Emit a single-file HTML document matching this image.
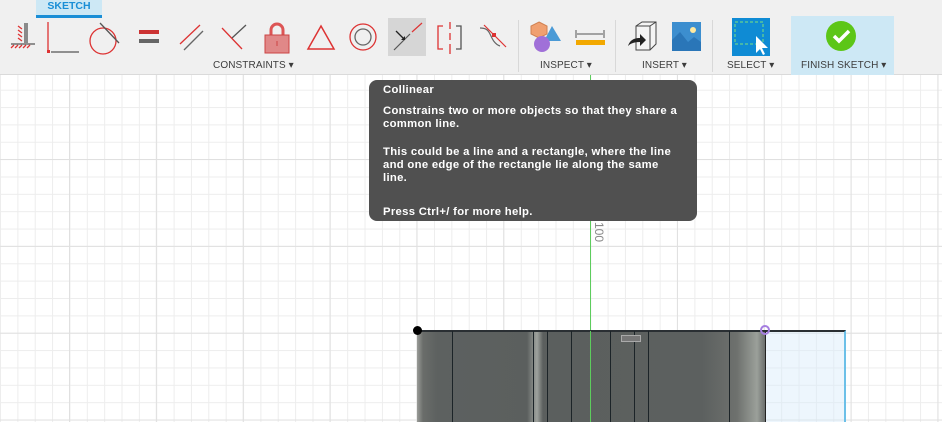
<!DOCTYPE html>
<html><head><meta charset="utf-8"><style>
*{margin:0;padding:0;box-sizing:border-box}
body{width:942px;height:422px;overflow:hidden;position:relative;font-family:"Liberation Sans",sans-serif;background:#fff}
#grid{position:absolute;left:0;top:75px;width:942px;height:347px;
background-image:
linear-gradient(to right,#e0e0e0 1px,transparent 1px),
linear-gradient(to bottom,#e0e0e0 1px,transparent 1px),
linear-gradient(to right,#ededed 1px,transparent 1px),
linear-gradient(to bottom,#ededed 1px,transparent 1px);
background-size:86.85px 86.85px,86.85px 86.85px,17.37px 17.37px,17.37px 17.37px;
background-position:69px 84px,0 84px,0 14.7px,0 14.7px}
#tb{position:absolute;left:0;top:0;width:942px;height:75px;background:#f0f0f0;border-bottom:1px solid #dadada}
.lbl{position:absolute;top:60px;font-size:10px;color:#3c3c3c;letter-spacing:0.1px}
.sep{position:absolute;top:20px;width:1px;height:52px;background:#d8d8d8}
svg{position:absolute}
#tip{position:absolute;left:369px;top:80px;width:328px;height:141px;background:#505050;border-radius:8px;color:#fff;font-size:11.3px;letter-spacing:0.3px;font-weight:bold;padding:4px 14px;line-height:13.2px;white-space:nowrap}
</style></head><body>
<div id="grid"></div>
<div style="position:absolute;left:590px;top:75px;width:1px;height:347px;background:#5dcc5d"></div>
<div style="position:absolute;left:417px;top:330px;width:348px;height:92px;background:linear-gradient(to right,#9a9c98 0px,#6a6d6a 6px,#5d6160 20px,#5b5f5e 110px,#9ea29d 120px,#5b5f5e 126px,#5c605f 285px,#6e716e 320px,#9ba09a 340px,#6b6f6d 348px);border-top:2px solid #2a2f33"></div>
<div style="position:absolute;left:765px;top:330px;width:81px;height:92px;background:rgba(215,235,250,0.45);border-top:2px solid #2a2f33;border-left:1px solid #222;border-right:2px solid #6cc0e8"></div>
<div style="position:absolute;left:452px;top:331px;width:1px;height:91px;background:#1c2428"></div>
<div style="position:absolute;left:533px;top:331px;width:1px;height:91px;background:#1c2428"></div>
<div style="position:absolute;left:547px;top:331px;width:1px;height:91px;background:#1c2428"></div>
<div style="position:absolute;left:571px;top:331px;width:1px;height:91px;background:#1c2428"></div>
<div style="position:absolute;left:610px;top:331px;width:1px;height:91px;background:#1c2428"></div>
<div style="position:absolute;left:634px;top:331px;width:1px;height:91px;background:#1c2428"></div>
<div style="position:absolute;left:648px;top:331px;width:1px;height:91px;background:#1c2428"></div>
<div style="position:absolute;left:729px;top:331px;width:1px;height:91px;background:#1c2428"></div>
<div style="position:absolute;left:590px;top:331px;width:1px;height:91px;background:#5dcc5d"></div>
<div style="position:absolute;left:621px;top:335px;width:20px;height:7px;border:1px solid #aaa;background:#777"></div>
<div style="position:absolute;left:413px;top:326px;width:9px;height:9px;border-radius:50%;background:#000"></div>
<div style="position:absolute;left:760px;top:325px;width:10px;height:10px;border-radius:50%;border:2px solid #a57ee0"></div>
<div style="position:absolute;top:222px;font-size:12px;color:#888;transform:rotate(90deg);transform-origin:left top;left:606px">100</div>

<div id="tb">
<div style="position:absolute;left:36px;top:0;width:66px;height:18px;background:#cde8f5;border-bottom:3px solid #1a8ed6;color:#1a8ed6;font-size:10.5px;font-weight:bold;text-align:center;line-height:13px">SKETCH</div>
<svg width="30" height="40" style="left:8px;top:20px"><g stroke="#d33" stroke-width="1.3" fill="none"><path d="M10 6l4 3M10 10l4 3M10 14l4 3M10 18l4 3"/><path d="M3 28l3-3M7 28l3-3M11 28l3-3M15 28l3-3M19 28l3-3"/></g><path d="M17 3v20M19 3v20M3 24h24" stroke="#555" stroke-width="1.3"/></svg>
<svg width="40" height="40" style="left:45px;top:20px"><path d="M3 2v30" stroke="#d33" stroke-width="1.3"/><rect x="2" y="30" width="3" height="3" fill="#d33"/><path d="M6 32h28" stroke="#555" stroke-width="1.3"/></svg>
<svg width="40" height="40" style="left:88px;top:20px"><circle cx="15" cy="21" r="13" fill="none" stroke="#d33" stroke-width="1.3"/><path d="M12 3l19 20" stroke="#555" stroke-width="1.3"/></svg>
<svg width="30" height="30" style="left:137px;top:27px"><rect x="2" y="3" width="20" height="4" fill="#c33"/><rect x="2" y="12" width="20" height="4" fill="#666"/></svg>
<svg width="36" height="36" style="left:176px;top:22px"><path d="M4 22L24 3" stroke="#d33" stroke-width="1.3"/><path d="M8 28L27 9" stroke="#666" stroke-width="1.3"/></svg>
<svg width="36" height="36" style="left:219px;top:22px"><path d="M3 6l20 21" stroke="#d33" stroke-width="1.3"/><path d="M13 16L27 3" stroke="#555" stroke-width="1.3"/></svg>
<svg width="36" height="40" style="left:262px;top:20px"><path d="M9 15v-5a6 6 0 0 1 12 0v5" stroke="#d55" stroke-width="3" fill="none"/><rect x="3" y="15" width="24" height="18" fill="#e08888" stroke="#c44" stroke-width="1"/><path d="M15 21v5" stroke="#c44"/></svg>
<svg width="36" height="36" style="left:305px;top:22px"><path d="M16 4L29 27H3z" fill="none" stroke="#d33" stroke-width="1.5"/></svg>
<svg width="36" height="36" style="left:348px;top:22px"><circle cx="15" cy="15" r="13" fill="none" stroke="#d33" stroke-width="1.3"/><circle cx="15" cy="15" r="8" fill="none" stroke="#666" stroke-width="1.3"/></svg>
<div style="position:absolute;left:388px;top:18px;width:38px;height:38px;background:#d6d6d6"></div>
<svg width="36" height="36" style="left:391px;top:20px"><path d="M3 30L19 14" stroke="#555" stroke-width="1.2"/><path d="M21 12L31 3" stroke="#d33" stroke-width="1.2"/><path d="M5 11l8 8" stroke="#222" stroke-width="1.3"/><path d="M10 20l4 0l0-4z" fill="#222"/></svg>
<svg width="36" height="36" style="left:435px;top:22px"><path d="M8 4H3v23h5" stroke="#d33" stroke-width="1.3" fill="none"/><path d="M21 4h5v23h-5" stroke="#555" stroke-width="1.3" fill="none"/><path d="M15 0v7M15 11v7M15 22v10" stroke="#d33" stroke-width="1.3"/></svg>
<svg width="36" height="36" style="left:478px;top:22px"><path d="M2 6c6 0 8 2 10 6s4 10 10 12" stroke="#666" stroke-width="1.2" fill="none"/><path d="M6 3l22 22" stroke="#d33" stroke-width="1.2"/><rect x="14" y="11" width="4" height="4" fill="#d33"/></svg>
<div class="lbl" style="left:213px">CONSTRAINTS ▾</div>
<div class="sep" style="left:518px"></div>
<svg width="36" height="36" style="left:530px;top:20px"><path d="M9 2l8 4v8l-8 4l-8-4V6z" fill="#f0a070" stroke="#d08050"/><path d="M22 6l9 15H14z" fill="#4a9ad6"/><circle cx="12" cy="24" r="8" fill="#a070d8"/></svg>
<svg width="36" height="30" style="left:574px;top:26px"><path d="M2 4v8M30 4v8M3 8h26" stroke="#555" stroke-width="1"/><rect x="2" y="14" width="29" height="5" fill="#f2a800"/></svg>
<div class="lbl" style="left:540px">INSPECT ▾</div>
<div class="sep" style="left:615px"></div>
<svg width="36" height="36" style="left:626px;top:20px"><path d="M10 6l6-4h14v22l-6 6H10z" fill="#f4f4f4" stroke="#444"/><path d="M10 6h14v24M24 6l6-4" fill="none" stroke="#444"/><path d="M2 26c2-6 6-8 12-8v-4l6 6-6 6v-4c-5 0-9 1-12 4z" fill="#222"/></svg>
<div style="position:absolute;left:672px;top:22px;width:29px;height:29px;background:#3c8ecf"></div>
<svg width="29" height="29" style="left:672px;top:22px"><path d="M0 29V18l8-8 8 10 6-5 7 5v9z" fill="#2a76b8"/><circle cx="21" cy="8" r="3" fill="#ffe9a0"/></svg>
<div class="lbl" style="left:642px">INSERT ▾</div>
<div class="sep" style="left:712px"></div>
<div style="position:absolute;left:732px;top:18px;width:38px;height:38px;background:#0f8bd4"></div>
<svg width="38" height="38" style="left:732px;top:18px"><rect x="3" y="4" width="28" height="22" fill="none" stroke="#7ee07e" stroke-dasharray="3 2"/><path d="M24 18v17l4-4 3 6 2-1-3-6h6z" fill="#fff"/></svg>
<div class="lbl" style="left:727px">SELECT ▾</div>
<div style="position:absolute;left:791px;top:16px;width:103px;height:59px;background:#cde8f5"></div>
<svg width="34" height="34" style="left:825px;top:20px"><circle cx="16" cy="16" r="15" fill="#5cc617"/><path d="M9 16l5 5 10-10" stroke="#fff" stroke-width="3.5" fill="none"/></svg>
<div class="lbl" style="left:801px">FINISH SKETCH ▾</div>
</div>

<div id="tip">Collinear<div style="height:8px"></div>Constrains two or more objects so that they share a<br>common line.<div style="height:14px"></div>This could be a line and a rectangle, where the line<br>and one edge of the rectangle lie along the same<br>line.<div style="height:21px"></div>Press Ctrl+/ for more help.</div>
</body></html>
